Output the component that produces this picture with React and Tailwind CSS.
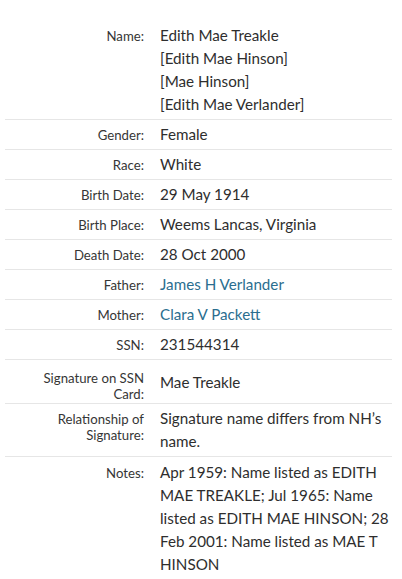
const font = { fontFamily: 'Lato, "Open Sans", sans-serif' };

const rows = [
  { label: 'Gender', value: 'Female' },
  { label: 'Race', value: 'White' },
  { label: 'Birth Date', value: '29 May 1914' },
  { label: 'Birth Place', value: 'Weems Lancas, Virginia' },
  { label: 'Death Date', value: '28 Oct 2000' },
  { label: 'Father', value: 'James H Verlander', link: true },
  { label: 'Mother', value: 'Clara V Packett', link: true },
  { label: 'SSN', value: '231544314' },
];

function Row({ label, children, className = 'items-baseline py-[3px]', labelClass = '', valueClass = '', last }) {
  return (
    <div className={`flex ${last ? '' : 'border-b border-[#e6e6e6]'} ${className}`}>
      <div className={`w-[139px] shrink-0 whitespace-nowrap text-right text-[13.2px] leading-[16px] text-[#363636] ${labelClass}`}>
        {label}
      </div>
      <div className={`ml-4 w-[232px] whitespace-nowrap text-[15.2px] leading-[23px] text-[#2e2e2e] ${valueClass}`}>
        {children}
      </div>
    </div>
  );
}

export default function App() {
  return (
    <div className="min-h-[579px] bg-white pt-[21px]" style={font}>
      <div className="mx-[5px] w-[387px]">
        <Row label="Name:">
          <div>Edith Mae Treakle</div>
          <div>[Edith Mae Hinson]</div>
          <div>[Mae Hinson]</div>
          <div>[Edith Mae Verlander]</div>
        </Row>

        {rows.map((r) => (
          <Row key={r.label} label={`${r.label}:`}>
            {r.link ? <a className="text-[#2b6e8f]">{r.value}</a> : r.value}
          </Row>
        ))}

        <Row
          label={<>Signature on SSN<br />Card:</>}
          className="items-start pt-[3px] pb-[1px]"
          labelClass="mt-[7px]"
          valueClass="mt-[8px]"
        >
          Mae Treakle
        </Row>

        <Row label={<>Relationship of<br />Signature:</>}>
          Signature name differs from NH’s<br />name.
        </Row>

        <Row label="Notes:" className="items-baseline pt-[4px]" last>
          Apr 1959: Name listed as EDITH<br />
          MAE TREAKLE; Jul 1965: Name<br />
          listed as EDITH MAE HINSON; 28<br />
          Feb 2001: Name listed as MAE T<br />
          HINSON
        </Row>
      </div>
    </div>
  );
}
